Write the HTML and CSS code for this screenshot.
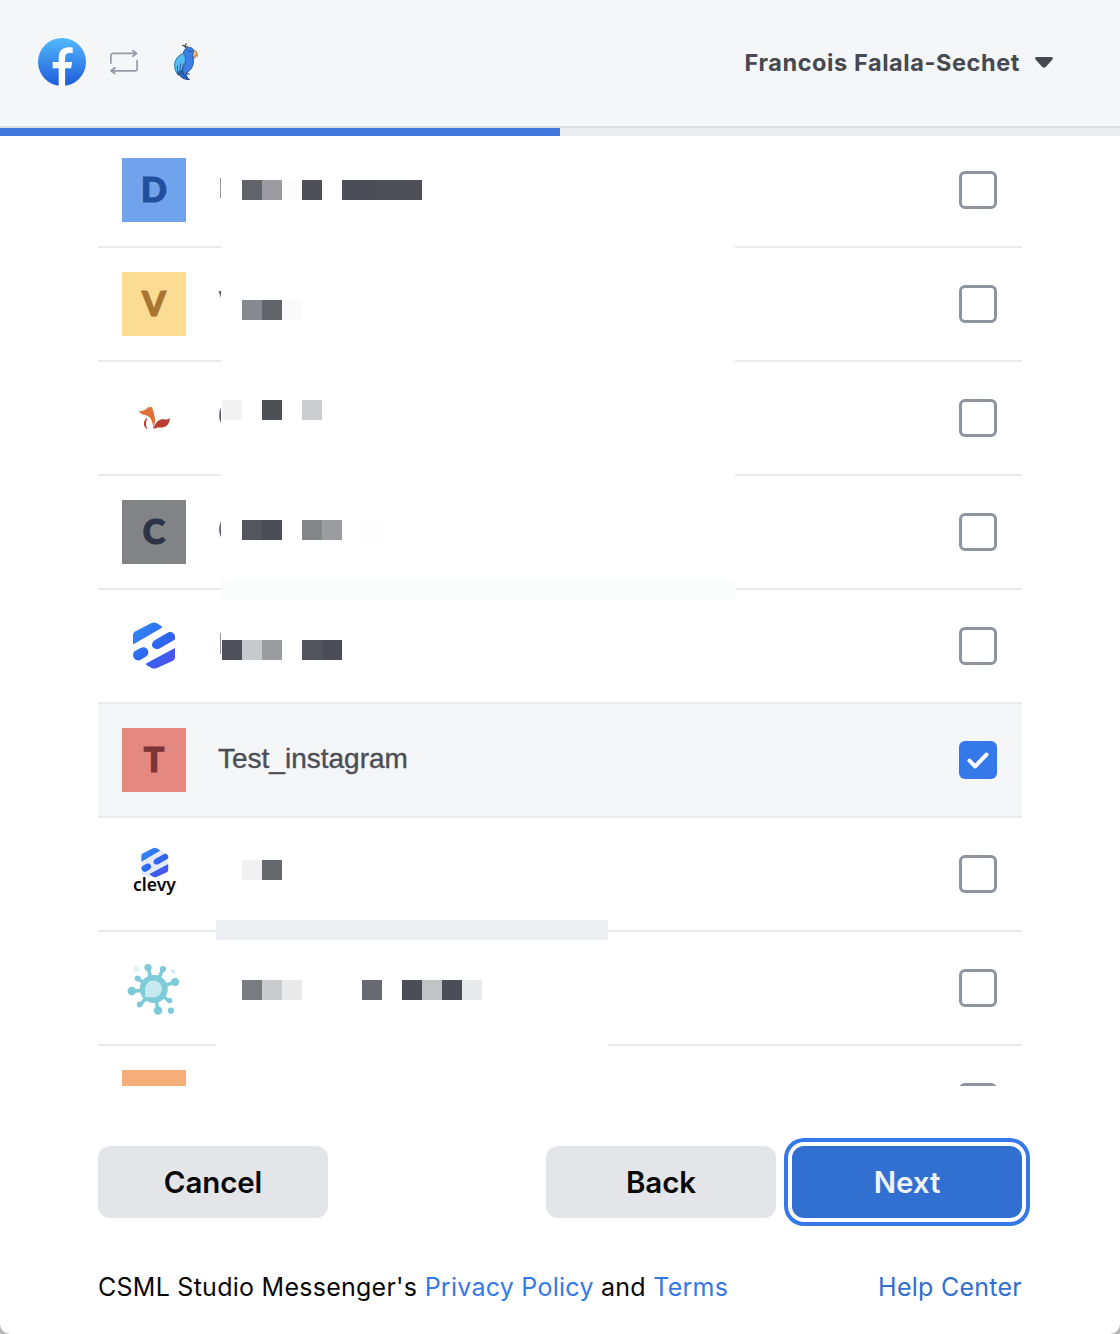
FILE: index.html
```html
<!DOCTYPE html>
<html lang="en">
<head>
<meta charset="utf-8">
<title>CSML Studio Messenger</title>
<link rel="stylesheet" href="styles.css">
</head>
<body>
<main class="dialog">
  <header class="header">
    <div class="brands">
      <svg class="facebook" viewBox="0 0 48 48">
        <defs><linearGradient id="fb" x1="0" y1="0" x2="0" y2="1"><stop offset="0" stop-color="#52b9fb"/><stop offset="1" stop-color="#1f5bdb"/></linearGradient></defs>
        <circle cx="24" cy="24" r="24" fill="url(#fb)"/>
        <path fill="#fff" d="M20.700 48V30.200h-6V24h6v-4.500c0-6.800 4-10.300 10-10.300 1.800 0 3 .1 4 .3v5.600h-3.100c-3.300 0-4.500 1.600-4.500 4.500V24h7.100l-1.100 6.200h-6V48z"/>
      </svg>
      <svg class="swap" viewBox="0 0 30 26" fill="none" stroke="#949aa5" stroke-width="1.700" stroke-linecap="round" stroke-linejoin="round">
        <path d="M1.900 14V6.400a2 2 0 0 1 2-2h23.500M23.800 1.600l3.800 2.800-3.800 2.800M28.100 11.500v8.300a2 2 0 0 1-2 2H2M6 18.800l-4 3 4 2.800"/>
      </svg>
      <svg class="parrot" viewBox="0 0 28 40" stroke-linejoin="round" stroke-linecap="round">
        <path d="M12.500 5.500Q11 3 9.500 3.500M12.500 5.500q-.8-3 .8-3.800M12.800 5.500q1-1.500 1.500-1" fill="none" stroke="#50555e" stroke-width="1.200"/>
        <path d="M19.500 8.200c3-.4 5.300 2 4.700 6.300-.8-1-1.500-1-2-.5.300 1.200-.2 2-1.200 2.300L18.800 13z" fill="#f2c170" stroke="#5a4a3a" stroke-width=".7"/>
        <path d="M10.500 11c.3-4 3.500-6 6.200-5.600 3 .2 4.500 2.600 3.500 5.400-.8 2.500-.3 3.700.1 6.200.8 5-1 10.500-6.300 13.500l-1 2 2.500 5-6-1.500-3-6.500z" fill="#397fe6" stroke="#24477f" stroke-width=".8"/>
        <path d="M10.500 11.500c2.500 2.500 2.400 6.500 1 11-1.200 4.500-3 8.500-6 10.800C2 30 .5 23.500 2.500 18.500c1.200-3 4-6 8-7z" fill="#52bdf3" stroke="#28598f" stroke-width=".8"/>
        <path d="M5 31c2 4 6 6.800 11.500 6.500-2-1.300-4.500-2-6-5.500l-1.200-3.500z" fill="#2b6fd0" stroke="#1c3b70" stroke-width=".8"/>
        <path d="M4.500 24q-.5 4.500 1 8.500M7.500 22q-1 6 0 11M10.300 22q-1.500 5-.8 9.500M15.500 9.500q1.300-1.500 2.800 0M13.500 30.500l3 1.500M12.500 32l2.500.5" fill="none" stroke="#21467f" stroke-width=".8"/>
      </svg>
    </div>
    <div class="account"><span class="account-name">Francois Falala-Sechet</span>
      <svg class="caret" viewBox="0 0 18 11"><path d="M1.600 0h14.800c1.400 0 2 1.500 1 2.500l-6.700 7.400c-1 1.100-2.400 1.100-3.400 0L.6 2.500C-.4 1.500.2 0 1.600 0z" fill="#464950"/></svg>
    </div>
  </header>
  <div class="progress"><div class="progress-fill" style="width:50%"></div></div>

  <section class="list">
    <div class="row"><span class="avatar avatar-blue">D</span><span class="check"></span></div>
    <div class="row"><span class="avatar avatar-yellow">V</span><span class="check"></span></div>
    <div class="row"><span class="avatar avatar-picture">
      <svg viewBox="0 0 64 64"><path d="M16.500 25.500c4.500-.5 8-1.500 10-5l1 1 2.500-.8c.5 3 2.500 7 3 12 .3 4-1 6-1.200 11-1-8.500-3.300-13-7.300-14.200-4-.8-6-2-8-4z" fill="#e07038"/><path d="M25.500 31.500c-5 3-4.500 10 0 12-2-4-2-7 0-12zM31.500 43c2.500-9.500 8-10.500 11.500-9.500 2 .4 3.500-.4 5-1.500-.5 8-6 10-10 9.500-2.500-.3-4 .3-6.500 1.500z" fill="#b93d31"/></svg>
    </span><span class="check"></span></div>
    <div class="row"><span class="avatar avatar-gray">C</span><span class="check"></span></div>
    <div class="row"><span class="avatar avatar-picture">
      <svg viewBox="0 0 64 64">
        <defs>
          <linearGradient id="mark" gradientUnits="userSpaceOnUse" x1="12" y1="14" x2="50" y2="52"><stop offset="0" stop-color="#3488f5"/><stop offset=".5" stop-color="#2c68ef"/><stop offset="1" stop-color="#5150ee"/></linearGradient>
          <g id="clevy-mark"><path d="M11 30.500V21q0-2 2-3.400L29 9.300q3-1.500 6 0l4.500 2.900q1.500 1 0 1.700L11 30.500z"/><path d="M33 26l13.500-7.700c3.500-1.300 6.500 1.500 6.500 4.300v2.800L37.500 34.400c-3 1.500-7 .3-7.500-3.200 0-2.300 1-4 3-5.200z"/><path d="M14 36.500l5-2.700c4-1.800 7.700 1.300 7.300 4.700-.1 2-1.200 3.500-3 4.500l-4.700 2.800c-3.500 2-7.600-1.200-7.600-5.100 0-1.800 1-3.200 3-4.200z"/><path d="M53 34v9.500q0 2-2 3.300L35.500 53.800q-3 1.600-6 .1L24.500 51q-1.500-1 0-1.700L53 34z"/></g>
        </defs>
        <use href="#clevy-mark" fill="url(#mark)"/>
      </svg>
    </span><span class="check"></span></div>
    <div class="row row-selected"><span class="avatar avatar-red">T</span><span class="page-name">Test_instagram</span><span class="check check-on"><svg viewBox="0 0 38 38"><path d="M10.500 19.500l5.500 6L27.500 13.500" fill="none" stroke="#fafbfc" stroke-width="4" stroke-linecap="round" stroke-linejoin="round"/></svg></span></div>
    <div class="row"><span class="avatar avatar-picture">
      <svg viewBox="0 0 64 64"><path d="M20 19L40 8l6 12-1 10-12 5-13-1z" fill="#e5eafb"/><g transform="translate(12.300 .2) scale(.64)"><use href="#clevy-mark" fill="url(#mark)"/></g><text class="wordmark" x="11" y="49" textLength="43" lengthAdjust="spacingAndGlyphs">clevy</text></svg>
    </span><span class="check"></span></div>
    <div class="row"><span class="avatar avatar-picture">
      <svg viewBox="0 0 64 64"><g stroke="#7dcad9" stroke-width="3.500" stroke-linecap="round"><path d="M31.500 33L26 11.500M32 33l9-20M32 33l21-7M32 33l-16-10M32 33l-22 2.500M32 33L18 49M32 33l4 21M32 33l15 12"/></g><g fill="#7dcad9"><circle cx="31.800" cy="33" r="14"/><circle cx="26" cy="11.500" r="3.600"/><circle cx="41" cy="13" r="3.100"/><circle cx="53" cy="26" r="4"/><circle cx="15.700" cy="22.500" r="3"/><circle cx="9.700" cy="35" r="4.200"/><circle cx="17.700" cy="48.500" r="2.900"/><circle cx="36" cy="54.500" r="4.200"/><circle cx="47.500" cy="44.500" r="2.800"/><circle cx="49" cy="54.700" r="3.100"/></g><circle cx="14.500" cy="13" r="2.900" fill="#dff3f6"/><circle cx="51" cy="15.300" r="2.200" fill="#cceef2"/><path d="M23 41V33a8.500 8.500 0 1 1 8.500 8.500z" fill="#c5e9ee"/></svg>
    </span><span class="check"></span></div>
    <div class="row"><span class="avatar avatar-orange"></span><span class="check"></span></div>

    <svg class="mosaic mosaic-top" viewBox="218 136 518 564" shape-rendering="crispEdges">
      <path d="M221 136h514v564H221z" fill="#fff"/>
      <path d="M220 178h1v20h-1zM220 633h1v21h-1z" fill="#96979b"/>
      <g shape-rendering="auto" fill="#606168"><path d="M218.500 291h2.500v7z"/><path d="M221 408v15c-2.400-3-2.400-12 0-15zM221 522v15c-2.400-3-2.400-12 0-15z"/></g>
      <path d="M242 180h20v20h-20z" fill="#616468"/><path d="M262 180h20v20h-20z" fill="#9b9ba0"/><path d="M282 180h20v20h-20z" fill="#fcfcfd"/><path d="M302 180h20v20h-20z" fill="#4d5055"/><path d="M342 180h40v20h-40z" fill="#4c4e57"/><path d="M382 180h40v20h-40z" fill="#4e5055"/>
      <path d="M242 300h20v20h-20z" fill="#88898e"/><path d="M262 300h20v20h-20z" fill="#616469"/><path d="M282 300h20v20h-20z" fill="#fafafa"/>
      <path d="M222 400h20v20h-20z" fill="#f3f3f4"/><path d="M262 400h20v20h-20z" fill="#4d5055"/><path d="M302 400h20v20h-20z" fill="#cbcccd"/>
      <path d="M242 520h20v20h-20z" fill="#54565e"/><path d="M262 520h20v20h-20z" fill="#4c4e57"/><path d="M302 520h20v20h-20z" fill="#828689"/><path d="M322 520h20v20h-20z" fill="#9c9da1"/><path d="M362 520h20v20h-20z" fill="#fdfdfd"/>
      <path d="M221 580h514v20H221z" fill="#fafbfb"/>
      <path d="M222 640h20v20h-20z" fill="#4f515a"/><path d="M242 640h20v20h-20z" fill="#c8c9cd"/><path d="M262 640h20v20h-20z" fill="#9b9ca0"/><path d="M302 640h20v20h-20z" fill="#53555d"/><path d="M322 640h20v20h-20z" fill="#4c4e57"/>
    </svg>
    <svg class="mosaic mosaic-bottom" viewBox="216 840 392 220" shape-rendering="crispEdges">
      <path d="M216 840h392v220H216z" fill="#fff"/>
      <path d="M242 860h20v20h-20z" fill="#f1f1f2"/><path d="M262 860h20v20h-20z" fill="#65686d"/>
      <path d="M216 920h392v20H216z" fill="#edeef2"/>
      <path d="M242 980h20v20h-20z" fill="#797c80"/><path d="M262 980h20v20h-20z" fill="#cacbcd"/><path d="M282 980h20v20h-20z" fill="#e9e9e9"/><path d="M362 980h20v20h-20z" fill="#686a72"/><path d="M402 980h20v20h-20zM442 980h20v20h-20z" fill="#4c4e57"/><path d="M422 980h20v20h-20z" fill="#c0c4c7"/><path d="M462 980h20v20h-20z" fill="#e8e9eb"/>
    </svg>
  </section>

  <div class="actions">
    <button class="button">Cancel</button>
    <div class="actions-right"><button class="button">Back</button><button class="button button-primary">Next</button></div>
  </div>
  <footer class="footer">
    <p class="legal">CSML Studio Messenger's <a class="link" href="#">Privacy Policy</a> and <a class="link" href="#">Terms</a></p>
    <a class="link link-help" href="#">Help Center</a>
  </footer>
</main>
</body>
</html>
```

FILE: styles.css
```css
* { box-sizing: border-box; }
body { margin: 0; background: #b5b6b8; font-family: Inter, sans-serif; }
.dialog { width: 1120px; height: 1334px; background: #fff; border-radius: 0 0 10px 10px; overflow: hidden; }

.header { height: 128px; padding: 0 67px 2px 38px; display: flex; align-items: center; justify-content: space-between; background: #f5f6f8; border-bottom: 2px solid #dadce0; }
.brands { display: flex; align-items: center; }
.facebook { width: 48px; height: 48px; }
.swap { width: 30px; height: 26px; margin-left: 23px; }
.parrot { width: 28px; height: 40px; margin-left: 34px; }
.account { display: flex; align-items: center; gap: 15px; color: #464950; }
.account-name { padding-top: 2px; font-size: 23.5px; font-weight: 650; letter-spacing: .58px; line-height: 32px; }
.caret { width: 18px; height: 11px; }

.progress { height: 8px; background: #ebecf0; }
.progress-fill { height: 8px; background: #4277dd; }

.list { position: relative; height: 950px; padding: 0 98px; overflow: hidden; }
.row { height: 114px; padding: 0 25px 0 24px; display: flex; align-items: center; border-bottom: 2px solid #e9eaed; }
.row:first-child { margin-top: -2px; }
.row-selected { background: #f5f6f8; }
.avatar { width: 64px; height: 64px; padding-bottom: 2px; display: flex; align-items: center; justify-content: center; font: 900 34px/62px Lato, "Noto Sans", sans-serif; -webkit-text-stroke: 1.2px currentColor; }
.avatar-picture { padding: 0; -webkit-text-stroke: 0; }
.avatar svg { width: 64px; height: 64px; }
.avatar-blue { background: #71a3ed; color: #214f9e; }
.avatar-yellow { background: #fadc93; color: #a97530; }
.avatar-gray { background: #828386; color: #2c3547; }
.avatar-red { background: #e58980; color: #7e3436; }
.avatar-orange { background: #f5ae79; }
.wordmark { font: 600 18.5px "Noto Sans", sans-serif; fill: #080808; }
.page-name { margin-left: 32px; padding-bottom: 3px; font: 28px/36px "Liberation Sans", Arial, sans-serif; color: #4c4e57; -webkit-text-stroke: .4px #4c4e57; }
.check { width: 38px; height: 38px; margin-left: auto; border: 3px solid #8d949e; border-radius: 6px; background: #fff; }
.check-on { border: 0; background: #3578ea; }
.check-on svg { display: block; width: 38px; height: 38px; }

.mosaic { position: absolute; display: block; }
.mosaic-top { left: 218px; top: 0; width: 518px; height: 564px; }
.mosaic-bottom { left: 216px; top: 704px; width: 392px; height: 220px; }

.actions { margin-top: 60px; padding: 0 98px; display: flex; justify-content: space-between; }
.actions-right { display: flex; gap: 16px; }
.button { width: 230px; height: 72px; padding: 0 0 1px; border: 0; border-radius: 12px; background: #e4e5e9; color: #080808; font: 600 29.5px/40px Inter, sans-serif; letter-spacing: -.1px; }
.button-primary { background: #316fd1; color: #f2f3f5; box-shadow: 0 0 0 4px #fff, 0 0 0 8px #3578ea; }

.footer { margin-top: 49px; padding: 0 98px; display: flex; justify-content: space-between; font-size: 25px; line-height: 40px; letter-spacing: .26px; color: #080808; }
.legal { margin: 0; }
.link { color: #3578ea; text-decoration: none; }
.link-help { color: #316fd1; }
```
